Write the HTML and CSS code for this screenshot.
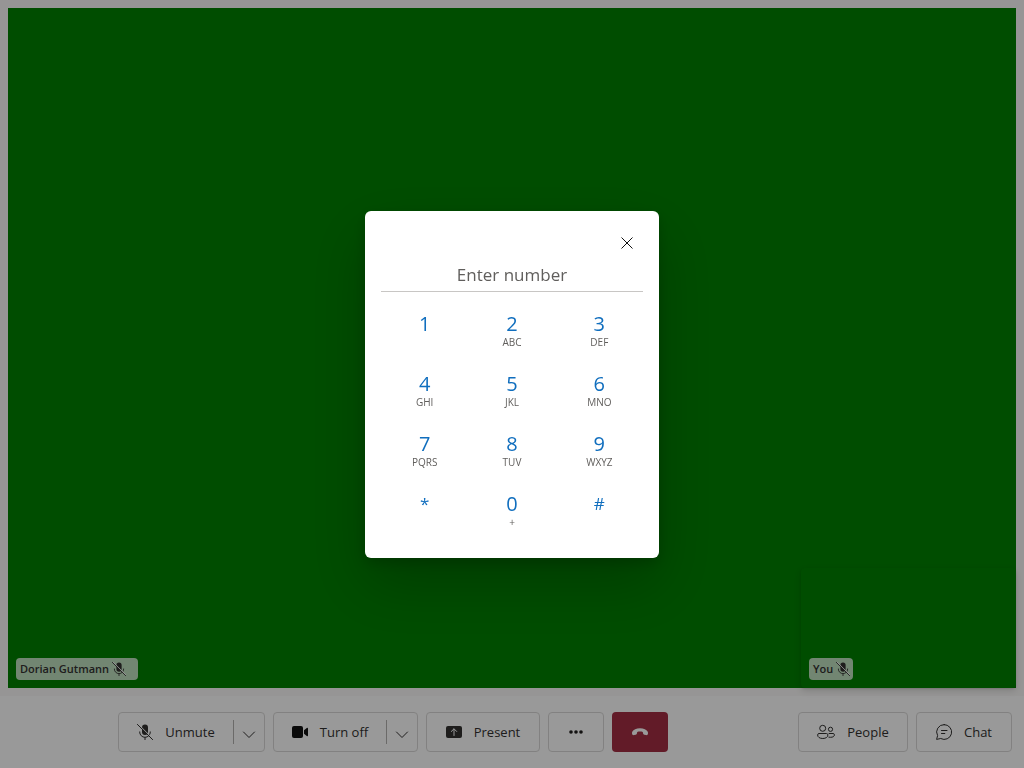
FILE: index.html
```html
<!DOCTYPE html>
<html lang="en">
<head>
<meta charset="utf-8">
<meta name="viewport" content="width=device-width, initial-scale=1">
<title>Call</title>
<link rel="stylesheet" href="styles.css">
</head>
<body>
<svg class="sprite" aria-hidden="true">
  <symbol id="mic-off" viewBox="0 0 16 16">
    <rect x="5" y="0.5" width="6" height="10.5" rx="3" fill="currentColor"/>
    <path d="M2.7 7.5v.5a5.3 5.3 0 0 0 10.6 0v-.5M8 13.300v2.700" fill="none" stroke="currentColor" stroke-width="1"/>
    <path class="mic-gap" d="M1.200 0 16 14.800" fill="none" stroke-width="1"/>
    <path d="M.4.4 15.600 15.600" fill="none" stroke="currentColor" stroke-width="1" stroke-linecap="round"/>
  </symbol>
  <symbol id="chevron" viewBox="0 0 14 8">
    <path d="m1.500 1 5.500 5.500L12.500 1" fill="none" stroke="currentColor" stroke-width="1" stroke-linecap="round"/>
  </symbol>
</svg>
<main class="call">
  <section class="stage" aria-label="Video gallery">
    <div class="tile-label">Dorian Gutmann <svg class="label-icon wide"><use href="#mic-off"/></svg></div>
    <div class="local-tile">
      <div class="tile-label">You <svg class="label-icon"><use href="#mic-off"/></svg></div>
    </div>
  </section>
  <footer class="bar">
    <div class="group center">
      <div class="split">
        <button class="main" type="button"><svg class="icon"><use href="#mic-off"/></svg>Unmute</button>
        <button class="more" type="button" aria-label="Microphone options"><svg class="chevron"><use href="#chevron"/></svg></button>
      </div>
      <div class="split">
        <button class="main camera" type="button"><svg class="icon" viewBox="0 0 16 16" fill="#111"><rect x="0" y="2" width="11" height="12" rx="2"/><path d="M12 6.200 14.800 4c.5-.4 1.200-.1 1.200.5v7c0 .6-.7.9-1.200.5L12 9.800z"/></svg>Turn off</button>
        <button class="more" type="button" aria-label="Camera options"><svg class="chevron"><use href="#chevron"/></svg></button>
      </div>
      <button class="btn present" type="button"><svg class="icon" viewBox="0 0 16 16"><rect x="0" y="2" width="16" height="12" rx="2" fill="currentColor"/><path d="M8 11.500v-6.500M5.300 7.500 8 4.800l2.700 2.700" fill="none" stroke="#fff" stroke-width="1" stroke-linecap="round"/></svg>Present</button>
      <button class="btn square" type="button" aria-label="More"><svg class="icon" viewBox="0 0 16 16" fill="#201f1e"><circle cx="3" cy="8" r="1.800"/><circle cx="8" cy="8" r="1.800"/><circle cx="13" cy="8" r="1.800"/></svg></button>
      <button class="btn square hangup" type="button" aria-label="Leave"><svg class="icon" viewBox="0 0 16 16" fill="currentColor"><path d="M8 4.200c3.800 0 6.500 1.300 7.600 3.200.5.900.5 1.900.2 2.800-.3.800-1 1.100-1.800.9l-1.700-.4c-.7-.2-1.200-.7-1.300-1.400l-.2-1.300c-1.700-.6-3.900-.6-5.600 0L5 9.300c-.1.700-.6 1.200-1.300 1.400l-1.700.4c-.8.2-1.500-.1-1.800-.9-.3-.9-.3-1.900.2-2.800C1.500 5.500 4.200 4.200 8 4.200z"/></svg></button>
    </div>
    <div class="group">
      <button class="btn people" type="button"><svg class="icon" viewBox="0 0 18 16" fill="none" stroke="currentColor" stroke-width="1"><circle cx="5.700" cy="4.300" r="3"/><circle cx="13.500" cy="5.300" r="2.100"/><path d="M2 9.500h7.500c.8 0 1.400.6 1.400 1.400 0 2.200-2 3.600-5.100 3.600S.6 13.100.6 10.900c0-.8.6-1.400 1.400-1.400zM11.700 9.500h4.400c.8 0 1.300.5 1.300 1.300 0 1.700-1.500 2.500-4 2.500-.7 0-1.300-.1-1.900-.2"/></svg>People</button>
      <button class="btn chat" type="button"><svg class="icon" viewBox="0 0 16 16" fill="none" stroke="currentColor" stroke-width="1" stroke-linecap="round" stroke-linejoin="round"><path d="M8.200.6a7.400 7.400 0 1 1-3.500 13.900L.6 15.400l1-3.800A7.400 7.400 0 0 1 8.200.6zM5.500 6.500h5.500M5.500 9.500h3.300"/></svg>Chat</button>
    </div>
  </footer>
</main>
<div class="overlay">
  <div class="dialpad" role="dialog" aria-modal="true" aria-label="Dialpad">
    <button class="close" type="button" aria-label="Close"><svg viewBox="0 0 12 12" fill="none" stroke="#111" stroke-width="1"><path d="m.5.5 11 11M11.500.5l-11 11"/></svg></button>
    <input class="number" type="text" placeholder="Enter number" aria-label="Enter number">
    <div class="keys">
      <button type="button">1</button>
      <button type="button">2<small>ABC</small></button>
      <button type="button">3<small>DEF</small></button>
      <button type="button">4<small>GHI</small></button>
      <button type="button">5<small>JKL</small></button>
      <button type="button">6<small>MNO</small></button>
      <button type="button">7<small>PQRS</small></button>
      <button type="button">8<small>TUV</small></button>
      <button type="button">9<small>WXYZ</small></button>
      <button class="symbol" type="button">*</button>
      <button type="button">0<small>+</small></button>
      <button class="symbol" type="button">#</button>
    </div>
  </div>
</div>
</body>
</html>
```
FILE: styles.css
```css
* { box-sizing: border-box; }
body {
  margin: 0;
  color: #323130;
  font-family: "Open Sans", "Noto Sans", sans-serif;
  font-size: 13px;
}
button, input { font: inherit; color: inherit; }
button { margin: 0; padding: 0; border: 0; background: none; cursor: pointer; }
svg { display: block; flex: none; }
.sprite { position: absolute; width: 0; height: 0; }
.mic-gap { stroke: #fff; }

.call { display: flex; flex-direction: column; height: 100vh; background: #faf9f8; }
.stage { position: relative; flex: 1; margin: 8px; background: #008000; }
.local-tile {
  position: absolute;
  right: 0;
  bottom: 0;
  width: 215px;
  height: 120px;
  border-radius: 4px;
  background: #008000;
  box-shadow: 0 3px 7px rgba(0, 0, 0, .13), 0 1px 2px rgba(0, 0, 0, .11);
}
.tile-label {
  position: absolute;
  left: 8px;
  bottom: 8px;
  display: flex;
  align-items: center;
  gap: 3px;
  height: 22px;
  padding: 0 3px 2px 4px;
  border-radius: 4px;
  background: rgba(255, 255, 255, .75);
  font-size: 11px;
  font-weight: 600;
}
.label-icon { width: 14px; height: 14px; margin-top: 2px; }
.label-icon.wide { margin-right: 9px; }

.bar { display: flex; align-items: center; gap: 12px; padding: 16px 12px 16px 0; background: #fff; }
.group { display: flex; gap: 8px; }
.center { flex: 1; justify-content: center; }
.btn, .split { display: flex; align-items: center; height: 40px; border: 1px solid #d9d8d7; border-radius: 4px; }
.btn { justify-content: center; }
.icon { width: 16px; height: 16px; }
.main { display: flex; align-items: center; justify-content: center; gap: 12px; width: 114px; height: 38px; }
.camera { width: 112px; }
.more { display: flex; align-items: center; justify-content: center; width: 31px; height: 24px; border-left: 1px solid #b3b1af; }
.chevron { width: 14px; height: 8px; margin-top: 5px; }
.present { width: 114px; gap: 12px; }
.square { width: 56px; }
.hangup { border: 0; background: #a42e43; color: #fff; }
.people { width: 110px; gap: 12px; }
.people .icon { width: 18px; }
.chat { width: 96px; gap: 12px; }

.overlay { position: fixed; inset: 0; display: grid; place-items: center; background: rgba(0, 0, 0, .4); }
.dialpad {
  display: flex;
  flex-direction: column;
  width: 294px;
  padding: 16px;
  border-radius: 6px;
  background: #fff;
  box-shadow: 0 26px 58px rgba(0, 0, 0, .22), 0 5px 14px rgba(0, 0, 0, .18);
}
.close { display: grid; place-items: center; align-self: flex-end; width: 32px; height: 32px; }
.close svg { width: 12px; height: 12px; }
.number {
  width: 100%;
  height: 33px;
  padding: 0;
  border: 0;
  border-bottom: 1px solid #c8c6c4;
  outline: 0;
  background: none;
  font-size: 17px;
  text-align: center;
}
.number::placeholder { color: #605e5c; opacity: 1; }
.keys { display: grid; grid-template-columns: repeat(3, 1fr); grid-auto-rows: 60px; margin-top: 10px; }
.keys button {
  display: flex;
  flex-direction: column;
  align-items: center;
  padding-top: 10px;
  color: #106ebe;
  font-size: 20px;
  line-height: 24px;
}
.keys .symbol { font-size: 17px; }
.keys small { color: #605e5c; font-size: 10px; line-height: 12px; }
```
